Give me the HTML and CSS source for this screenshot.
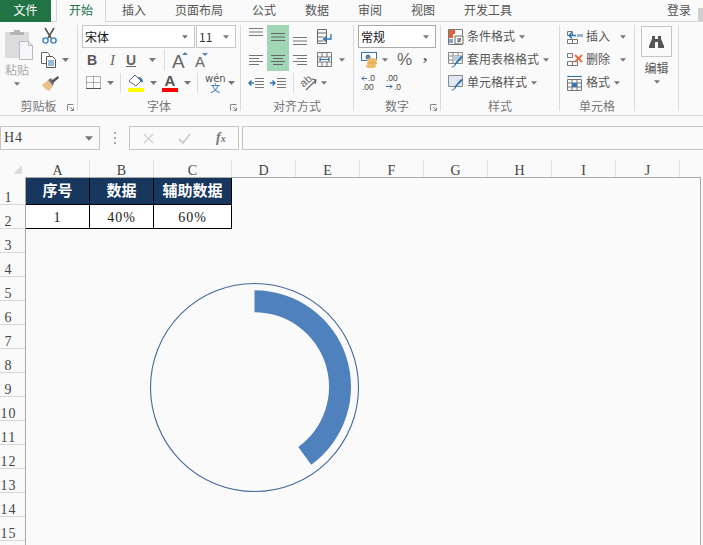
FILE: index.html
```html
<!DOCTYPE html>
<html lang="zh-CN">
<head>
<meta charset="utf-8">
<title>Excel</title>
<link rel="stylesheet" href="styles.css">
</head>
<body>
<svg class="defs" width="0" height="0">
  <symbol id="caret" viewBox="0 0 7 4"><path d="M0 0h7L3.5 4z" fill="#777"/></symbol>
  <symbol id="launch" viewBox="0 0 7 7"><path d="M.5 6.5v-6h6M3 3l3.5 3.5M6.5 3.5v3h-3" fill="none" stroke="#888"/></symbol>
</svg>
<div class="app">
  <nav class="tabs">
    <span class="tab file">文件</span>
    <span class="tab home">开始</span>
    <span class="tab t-insert">插入</span>
    <span class="tab t-layout">页面布局</span>
    <span class="tab t-formula">公式</span>
    <span class="tab t-data">数据</span>
    <span class="tab t-review">审阅</span>
    <span class="tab t-view">视图</span>
    <span class="tab t-dev">开发工具</span>
    <span class="tab login">登录</span>
    <span class="grip"></span>
  </nav>

  <section class="ribbon">
    <div class="group g-clip">
      <div class="group-body clip-body">
        <div class="paste">
          <svg width="28" height="30" viewBox="0 0 28 30"><rect x="0" y="2" width="24" height="26" rx="1" fill="#dcdcdc"/><path d="M5 4V2h4V0h6v2h4v3H5z" fill="#b4b4b4"/><path d="M14.500 11.500h9l4 4v14h-13z" fill="#f7f5f9" stroke="#bbb"/><path d="M23.500 11.500v4h4" fill="none" stroke="#bbb"/></svg>
          <span class="paste-label">粘贴</span>
          <svg class="paste-caret" width="6" height="4"><use href="#caret"/></svg>
        </div>
        <div class="clip-tools">
          <svg width="15" height="16" viewBox="0 0 15 16"><path d="M3 0l6 10M12 0L6 10" stroke="#555" stroke-width="1.600" fill="none"/><circle cx="3.500" cy="12.500" r="2.600" fill="none" stroke="#3b7cc0" stroke-width="1.400"/><circle cx="11.500" cy="12.500" r="2.600" fill="none" stroke="#3b7cc0" stroke-width="1.400"/></svg>
          <div class="clip-copy">
            <svg width="15" height="16" viewBox="0 0 15 16"><path d="M.5.500h6l2 2v9H.5z" fill="#fff" stroke="#666"/><path d="M5.500 4.500h6l3 3v8h-9z" fill="#fff" stroke="#555"/><path d="M7 9h6M7 11h6M7 13h6" stroke="#2f75b5"/></svg>
            <svg width="7" height="4"><use href="#caret"/></svg>
          </div>
          <svg width="17" height="15" viewBox="0 0 17 15"><path d="M0 9l6-5 5 6-4 5C4 14 2 12 0 9z" fill="#e9c189"/><path d="M6 4l3-2 3 4-1 4z" fill="#777"/><path d="M9 5l7-5 1 2-6 5z" fill="#555"/></svg>
        </div>
      </div>
      <footer class="group-label">剪贴板<svg class="launch" width="7" height="7"><use href="#launch"/></svg></footer>
    </div>

    <div class="group g-font">
      <div class="group-body">
        <div class="row font-selects">
          <div class="select font-name"><span class="select-text">宋体</span><svg width="6" height="4"><use href="#caret"/></svg></div>
          <div class="select font-size"><span class="select-text num">11</span><svg width="6" height="4"><use href="#caret"/></svg></div>
        </div>
        <div class="row steps font-row2">
          <span class="fmt bold">B</span>
          <span class="fmt italic">I</span>
          <span class="fmt under">U</span>
          <svg width="7" height="4"><use href="#caret"/></svg>
          <i class="sep"></i>
          <svg width="16" height="18" viewBox="0 0 16 18"><text x="0" y="17" class="big-a">A</text><path d="M10 4l3-3 3 3z" fill="#4a86c0"/></svg>
          <svg width="14" height="16" viewBox="0 0 14 16"><text x="0" y="15" class="small-a">A</text><path d="M7 1h6l-3 3z" fill="#4a86c0"/></svg>
        </div>
        <div class="row steps font-row3">
          <svg width="15" height="13" viewBox="0 0 15 13"><path d="M.5.500h14v12H.5zM7.500.500v12M.5 6.500h14" fill="none" stroke="#666" stroke-dasharray="1 1"/><path d="M0 12.500h15" stroke="#555"/></svg>
          <svg width="7" height="4"><use href="#caret"/></svg>
          <i class="sep"></i>
          <div class="color-tool">
            <svg width="16" height="13" viewBox="0 0 16 13"><path d="M1 7l6-6 6 6-5 5z" fill="#fff" stroke="#666"/><path d="M10 3c3 0 5 2 5 5l-2 0z" fill="#3f7fbf"/></svg>
            <b class="swatch yellow"></b>
          </div>
          <svg width="7" height="4"><use href="#caret"/></svg>
          <div class="color-tool">
            <span class="fmt color-a">A</span>
            <b class="swatch red"></b>
          </div>
          <svg width="7" height="4"><use href="#caret"/></svg>
          <i class="sep"></i>
          <div class="phon"><span>wén</span><span class="phon-zh">文</span></div>
          <svg width="7" height="4"><use href="#caret"/></svg>
        </div>
      </div>
      <footer class="group-label">字体<svg class="launch" width="7" height="7"><use href="#launch"/></svg></footer>
    </div>

    <div class="group g-align">
      <div class="group-body">
        <div class="align-grid">
          <div class="acell top"><svg width="14" height="8" viewBox="0 0 14 8"><path d="M0 .5h14M0 4h14M0 7.500h14" stroke="#777"/></svg></div>
          <div class="acell mid on"><svg width="14" height="8" viewBox="0 0 14 8"><path d="M0 .5h14M0 4h14M0 7.500h14" stroke="#666"/></svg></div>
          <div class="acell bot"><svg width="14" height="8" viewBox="0 0 14 8"><path d="M0 .5h14M0 4h14M0 7.500h14" stroke="#777"/></svg></div>
          <div class="acell tool-right"><svg width="15" height="16" viewBox="0 0 15 16"><path d="M.5.500h9v14h-9zM.5 4h9M.5 8h6M.5 12h6" fill="none" stroke="#666"/><path d="M14 5v5H7M9 7.500L6.500 10 9 12.500" fill="none" stroke="#2f75b5" stroke-width="1.300"/></svg></div>
          <div class="acell"><svg width="14" height="10" viewBox="0 0 14 10"><path d="M0 .5h14M0 3.500h10M0 6.500h14M0 9.500h10" stroke="#777"/></svg></div>
          <div class="acell on"><svg width="14" height="10" viewBox="0 0 14 10"><path d="M0 .5h14M2 3.500h10M0 6.500h14M2 9.500h10" stroke="#666"/></svg></div>
          <div class="acell"><svg width="14" height="10" viewBox="0 0 14 10"><path d="M0 .5h14M4 3.500h10M0 6.500h14M4 9.500h10" stroke="#777"/></svg></div>
          <div class="acell tool-right merge"><svg width="15" height="15" viewBox="0 0 15 15"><path d="M.5.500h14v14H.5zM.5 5h14M.5 10h14M5 .5V5M10 .5V5M5 10v4.500M10 10v4.500" fill="none" stroke="#777"/><path d="M2 7.500h11M4 6L2 7.500 4 9M11 6l2 1.500L11 9" fill="none" stroke="#2f75b5"/></svg><svg width="6" height="4"><use href="#caret"/></svg></div>
        </div>
        <div class="row steps align-row3">
          <svg width="16" height="10" viewBox="0 0 16 10"><path d="M7 .5h9M7 3.500h9M7 6.500h9M7 9.500h9" stroke="#777"/><path d="M6 5H1M3.500 2.500L1 5l2.500 2.500" fill="none" stroke="#2f75b5" stroke-width="1.400"/></svg>
          <svg width="16" height="10" viewBox="0 0 16 10"><path d="M7 .5h9M7 3.500h9M7 6.500h9M7 9.500h9" stroke="#777"/><path d="M0 5h5M2.500 2.500L5 5 2.500 7.500" fill="none" stroke="#2f75b5" stroke-width="1.400"/></svg>
          <i class="sep"></i>
          <svg width="16" height="16" viewBox="0 0 16 16"><text x="0" y="10" class="ab" transform="rotate(-42 5 8)">ab</text><path d="M5 15L15 5M11 4l4 1-1 4" fill="none" stroke="#666" stroke-width="1.200"/></svg>
          <svg width="6" height="4"><use href="#caret"/></svg>
        </div>
      </div>
      <footer class="group-label">对齐方式</footer>
    </div>

    <div class="group g-num">
      <div class="group-body">
        <div class="row">
          <div class="select num-format"><span class="select-text">常规</span><svg width="6" height="4"><use href="#caret"/></svg></div>
        </div>
        <div class="row steps num-row2">
          <svg width="17" height="16" viewBox="0 0 17 16"><rect x=".5" y=".5" width="15" height="8" fill="#fff" stroke="#2f75b5"/><circle cx="7" cy="5" r="2.500" fill="#5b7fa6"/><ellipse cx="11" cy="8" rx="5" ry="2" fill="#eebb6a"/><ellipse cx="11" cy="11" rx="5" ry="2" fill="#e8b25b"/><ellipse cx="10" cy="14" rx="5" ry="2" fill="#eebb6a"/></svg>
          <svg width="6" height="4"><use href="#caret"/></svg>
          <span class="percent">%</span>
          <span class="comma">,</span>
        </div>
        <div class="row steps num-row3">
          <svg width="15" height="15" viewBox="0 0 15 15"><text x="7" y="6" class="dec">.0</text><text x="1" y="15" class="dec">.00</text><path d="M6 3.500H1M3 1.500l-2 2 2 2" fill="none" stroke="#2f75b5"/></svg>
          <svg width="16" height="15" viewBox="0 0 16 15"><text x="1" y="6" class="dec">.00</text><text x="9" y="15" class="dec">.0</text><path d="M1 11.500h6M5 9.500l2 2-2 2" fill="none" stroke="#2f75b5"/></svg>
        </div>
      </div>
      <footer class="group-label">数字<svg class="launch" width="7" height="7"><use href="#launch"/></svg></footer>
    </div>

    <div class="group g-style">
      <div class="group-body">
        <div class="row list-row">
          <svg width="16" height="16" viewBox="0 0 16 16"><path d="M.5.500h14v15H.5z" fill="#fff" stroke="#777"/><path d="M1 1h6v4H1z" fill="#e0633a"/><path d="M1 5h4v4H1z" fill="#e0633a"/><path d="M1 10h4v4H1z" fill="#7fa6cf"/><path d="M7 7h8v8H7z" fill="#fff" stroke="#666"/><path d="M9 10h4M9 12h4M12.500 9l-2 4.500" stroke="#555" fill="none"/></svg>
          <span class="list-text">条件格式</span><svg width="6" height="4"><use href="#caret"/></svg>
        </div>
        <div class="row list-row">
          <svg width="16" height="16" viewBox="0 0 16 16"><path d="M.5.500h14v11H.5zM.5 4h14M.5 8h14M5 .5v11M10 .5v11" fill="none" stroke="#888"/><path d="M5 4h7v5H5z" fill="#b9cde3"/><path d="M15 5L9 11l-2 3c-1 1-3 2-4 1l3-1 1-3 6-7z" fill="#2f6fb0"/></svg>
          <span class="list-text">套用表格格式</span><svg width="6" height="4"><use href="#caret"/></svg>
        </div>
        <div class="row list-row">
          <svg width="16" height="16" viewBox="0 0 16 16"><path d="M.5.500h14v11H.5z" fill="#dfe8f2" stroke="#888"/><path d="M15 5L9 11l-2 3c-1 1-3 2-4 1l3-1 1-3 6-7z" fill="#2f6fb0"/></svg>
          <span class="list-text">单元格样式</span><svg width="6" height="4"><use href="#caret"/></svg>
        </div>
      </div>
      <footer class="group-label">样式</footer>
    </div>

    <div class="group g-cell">
      <div class="group-body">
        <div class="row list-row wide">
          <svg width="16" height="16" viewBox="0 0 16 16"><path d="M.5 2.500h5v4h-5zM.5 10.500h5v4h-5zM5.500 10.500h5v4h-5z" fill="none" stroke="#777"/><path d="M10 5h6v3h-6z" fill="#9fb6cf"/><path d="M9 6.500H2M5 3.500l-3 3 3 3" fill="none" stroke="#2f75b5" stroke-width="1.500"/></svg>
          <span class="list-text">插入</span><svg width="6" height="4"><use href="#caret"/></svg>
        </div>
        <div class="row list-row wide">
          <svg width="16" height="16" viewBox="0 0 16 16"><path d="M.5 1.500h5v4h-5zM.5 9.500h5v4h-5zM5.500 9.500h5v4h-5z" fill="none" stroke="#777"/><path d="M8 3l7 7M15 3l-7 7" stroke="#e86a3c" stroke-width="1.800"/></svg>
          <span class="list-text">删除</span><svg width="6" height="4"><use href="#caret"/></svg>
        </div>
        <div class="row list-row">
          <svg width="16" height="16" viewBox="0 0 16 16"><path d="M.5 4.500h14v11H.5zM.5 8h14M.5 12h14M5 4.500v11M10 4.500v11" fill="none" stroke="#777"/><path d="M5 8h5v4H5z" fill="#2f75b5"/><path d="M1 1.500h13M1 .5v2M14 .5v2" stroke="#2f75b5"/></svg>
          <span class="list-text">格式</span><svg width="6" height="4"><use href="#caret"/></svg>
        </div>
      </div>
      <footer class="group-label">单元格</footer>
    </div>

    <div class="group g-edit">
      <div class="group-body edit-body">
        <div class="edit-box">
          <svg width="15" height="12" viewBox="0 0 15 12"><path d="M3 0h3v3h3V0h3v3l3 7v2H9V6H6v6H0v-2l3-7z" fill="#555"/></svg>
        </div>
        <span class="edit-label">编辑</span>
        <svg width="6" height="4"><use href="#caret"/></svg>
      </div>
      <footer class="group-label"></footer>
    </div>
  </section>

  <section class="formula-bar">
    <div class="name-box"><span>H4</span><svg width="8" height="5"><use href="#caret"/></svg></div>
    <div class="dots"><i></i><i></i><i></i></div>
    <div class="fx-box">
      <svg width="11" height="11" viewBox="0 0 11 11"><path d="M1 1l9 9M10 1l-9 9" stroke="#d0d0d0" stroke-width="1.400"/></svg>
      <svg width="13" height="11" viewBox="0 0 13 11"><path d="M1 6l4 4 7-9" fill="none" stroke="#d0d0d0" stroke-width="2"/></svg>
      <span class="fx">f<small>x</small></span>
    </div>
    <div class="formula-input"></div>
  </section>

  <section class="sheet">
    <div class="col-heads">
      <div class="corner"><b></b></div>
      <span class="ch">A</span><span class="ch">B</span><span class="ch wide-col">C</span>
      <span class="ch">D</span><span class="ch">E</span><span class="ch">F</span><span class="ch">G</span><span class="ch">H</span><span class="ch">I</span><span class="ch">J</span>
    </div>
    <div class="sheet-body">
      <div class="row-heads">
        <span class="rh first">1</span><span class="rh">2</span><span class="rh">3</span><span class="rh">4</span><span class="rh">5</span><span class="rh">6</span><span class="rh">7</span><span class="rh">8</span><span class="rh">9</span><span class="rh">10</span><span class="rh">11</span><span class="rh">12</span><span class="rh">13</span><span class="rh">14</span><span class="rh">15</span><span class="rh"></span>
      </div>
      <div class="cells">
        <div class="data">
          <div class="dh">序号</div><div class="dh">数据</div><div class="dh">辅助数据</div>
          <div class="dc">1</div><div class="dc">40%</div><div class="dc">60%</div>
        </div>
        <svg class="chart" width="212" height="212" viewBox="0 0 212 212">
          <circle cx="106.500" cy="106.500" r="104" fill="none" stroke="#44699b" stroke-width="1.100"/>
          <path d="M106.500 9.200A96.500 96.500 0 0 1 163.200 183.800L150.300 166A74.500 74.500 0 0 0 106.500 31.200Z" fill="#4f81bd"/>
        </svg>
      </div>
    </div>
  </section>
</div>
</body>
</html>
```
FILE: styles.css
```css
* { box-sizing: border-box; }
html, body { margin: 0; height: 100%; overflow: hidden; }
body { background: #fafafa; font: 12px/16px "Noto Sans CJK SC", "Liberation Sans", sans-serif; color: #555; }
.defs { position: absolute; }
svg { display: block; overflow: visible; }
.app { width: 703px; height: 545px; overflow: hidden; }

/* tabs */
.tabs { display: flex; height: 22px; border-bottom: 1px solid #d6d6d6; align-items: stretch; }
.tab { display: flex; flex: none; align-items: center; justify-content: center; color: #555; padding-bottom: 2px; white-space: nowrap; }
.file { width: 51px; background: #217346; color: #fff; margin-bottom: -1px; }
.home { width: 50px; margin-left: 5px; color: #217346; background: #fafafa; border: 1px solid #d6d6d6; border-top: 0; border-bottom: 0; margin-bottom: -1px; }
.t-insert { width: 56px; }
.t-layout { width: 74px; }
.t-formula { width: 56px; }
.t-data { width: 50px; }
.t-review { width: 56px; }
.t-view { width: 50px; }
.t-dev { width: 80px; }
.login { width: 24px; margin-left: 139px; }
.grip { flex: none; width: 5px; height: 13px; margin: 8px 0 0 7px; background: #cfcfcf; }

/* ribbon */
.ribbon { display: flex; height: 94px; border-bottom: 1px solid #d8d8d8; padding-top: 3px; background: #fafafa; }
.group { display: flex; flex-direction: column; flex: none; height: 86px; border-right: 1px solid #dcdcdc; }
.g-clip { width: 78px; }
.g-font { width: 163px; }
.g-align { width: 113px; }
.g-num { width: 87px; }
.g-style { width: 119px; }
.g-cell { width: 75px; }
.g-edit { width: 44px; }
.group-body { flex: none; height: 72px; }
.group-label { position: relative; flex: none; height: 14px; margin-top: 2px; text-align: center; line-height: 14px; color: #777; }
.launch { position: absolute; right: 3px; bottom: 2px; }
.row { height: 23px; display: flex; align-items: center; }
.steps { display: grid; justify-items: start; align-items: center; }
.sep { display: block; width: 1px; height: 20px; background: #dcdcdc; }

/* clipboard */
.clip-body { display: flex; padding: 3px 0 0 5px; }
.paste { width: 37px; display: flex; flex-direction: column; color: #aaa; padding-top: 2px; }
.paste-label { line-height: 14px; margin-top: 3px; width: 24px; text-align: center; }
.paste-caret { margin: 5px 0 0 9px; }
.clip-tools { display: flex; flex-direction: column; gap: 8px; }
.clip-copy { display: flex; align-items: center; gap: 6px; margin-left: -1px; }

/* selects */
.select { display: flex; align-items: center; justify-content: space-between; height: 23px; border: 1px solid #c6c6c6; padding: 0 6px 0 2px; background: #fff; }
.select-text { color: #111; }
.font-selects { padding-left: 4px; gap: 1px; }
.font-name { width: 113px; }
.font-size { width: 40px; }
.num { color: #333; }
.num-format { width: 78px; margin-left: 4px; border-color: #aaa; }

/* font group */
.font-row2 { grid-template-columns: 23px 16px 23px 15px 8px 23px auto; padding-left: 9px; }
.font-row3 { grid-template-columns: 21px 13px 8px 22px 12px 22px 13px 8px 23px auto; padding-left: 8px; }
.fmt { font-family: "Liberation Sans", sans-serif; color: #555; line-height: 16px; }
.bold { font-size: 14px; font-weight: 700; }
.italic { font-family: "Liberation Serif", serif; font-size: 15px; font-style: italic; color: #666; }
.under { font-size: 14px; font-weight: 700; text-decoration: underline; color: #666; }
.big-a { font: 19px "Liberation Sans", sans-serif; fill: #666; }
.small-a { font: 15px "Liberation Sans", sans-serif; fill: #666; }
.color-tool { display: flex; flex-direction: column; width: 16px; }
.color-a { font-size: 15px; font-weight: 700; line-height: 13px; text-align: center; }
.swatch { display: block; height: 4px; margin-top: 1px; }
.yellow { background: #ff0; }
.red { background: #f00; }
.phon { display: flex; flex-direction: column; align-items: center; padding-top: 2px; font: 10px/9px "DejaVu Sans", sans-serif; color: #555; }
.phon-zh { font: 10px/10px "Noto Sans CJK SC", sans-serif; color: #2f75b5; }

/* alignment */
.align-grid { display: grid; grid-template-columns: repeat(3, 22px) auto; grid-auto-rows: 23px; padding-left: 4px; }
.acell { display: flex; align-items: center; justify-content: center; }
.on { background: #a0d5b6; }
.top { align-items: flex-start; padding-top: 3px; }
.bot { align-items: flex-end; padding-bottom: 3px; }
.tool-right { justify-content: flex-start; padding-left: 6px; }
.merge { gap: 7px; }
.align-row3 { grid-template-columns: 22px 23px 8px 20px auto; padding-left: 7px; }
.ab { font: 11px "Liberation Sans", sans-serif; fill: #666; }

/* number */
.num-row2 { grid-template-columns: 21px 15px 26px auto; padding-left: 7px; }
.percent { font: 17px/20px "Liberation Sans", sans-serif; color: #666; }
.comma { font: 700 17px/20px "Liberation Serif", serif; color: #666; margin-top: -8px; }
.num-row3 { grid-template-columns: 24px auto; padding-left: 7px; }
.dec { font: 8.500px "Liberation Sans", sans-serif; fill: #444; }

/* style + cells */
.list-row { gap: 4px; padding-left: 7px; }
.list-row > svg:first-child { margin-right: -1px; }
.list-text { color: #555; white-space: nowrap; padding-bottom: 1px; }
.wide { gap: 4px; }
.wide > .list-text { margin-right: 6px; }

/* edit */
.edit-body { display: flex; flex-direction: column; align-items: center; }
.edit-box { width: 31px; height: 31px; margin-top: 1px; border: 1px solid #c6c6c6; display: flex; align-items: center; justify-content: center; }
.edit-label { margin: 3px 0 4px; line-height: 16px; }

/* formula bar */
.formula-bar { display: flex; height: 44px; padding-top: 10px; background: #fafafa; }
.name-box { width: 100px; height: 24px; border: 1px solid #c6c6c6; display: flex; align-items: center; justify-content: space-between; padding: 0 6px 0 3px; font: 14px "Liberation Serif", serif; letter-spacing: 1px; color: #444; }
.dots { width: 29px; display: flex; flex-direction: column; align-items: center; justify-content: center; gap: 3px; height: 24px; }
.dots i { display: block; width: 2px; height: 2px; background: #aaa; }
.fx-box { width: 110px; height: 24px; border: 1px solid #c6c6c6; display: flex; align-items: center; gap: 24px; padding-left: 13px; }
.fx { font: italic 700 14px/16px "Liberation Serif", serif; color: #777; margin-left: 1px; }
.fx small { font-size: 10px; }
.formula-input { flex: 1; height: 24px; margin-left: 3px; border: 1px solid #c6c6c6; border-right: 0; }

/* sheet */
.sheet { display: flex; flex-direction: column; }
.col-heads { display: flex; height: 17px; font: 14px/21px "Liberation Serif", serif; color: #444; }
.corner { width: 26px; position: relative; }
.corner b { position: absolute; left: 13px; top: 5px; width: 0; height: 0; border-left: 9px solid transparent; border-bottom: 9px solid #dcdcdc; }
.ch { width: 64px; text-align: center; border-right: 1px solid #e0e0e0; }
.wide-col { width: 78px; }
.sheet-body { display: flex; }
.row-heads { width: 25px; flex: none; display: flex; flex-direction: column; font: 14px/13px "Liberation Serif", serif; letter-spacing: 1px; color: #444; }
.rh { height: 24px; width: 25px; padding: 0 8px 0 0; display: flex; align-items: flex-end; justify-content: center; border-bottom: 1px solid #d8d8d8; flex: none; }
.first { height: 28px; }
.cells { position: relative; width: 676px; height: 380px; border: 1px solid #a8a8a8; border-bottom: 0; background: #fafafa; }
.data { display: grid; grid-template-columns: 64px 64px 78px; grid-template-rows: 27px 24px; width: 206px; }
.dh, .dc { display: flex; align-items: center; justify-content: center; border-right: 1px solid #000; border-bottom: 1px solid #000; }
.dh { background: #17375e; color: #fff; font-size: 15px; font-weight: 700; padding-bottom: 2px; }
.dc { background: #fff; color: #222; font: 14px "Liberation Serif", serif; letter-spacing: 1px; padding-top: 3px; }
.chart { position: absolute; left: 122px; top: 103px; }
```
